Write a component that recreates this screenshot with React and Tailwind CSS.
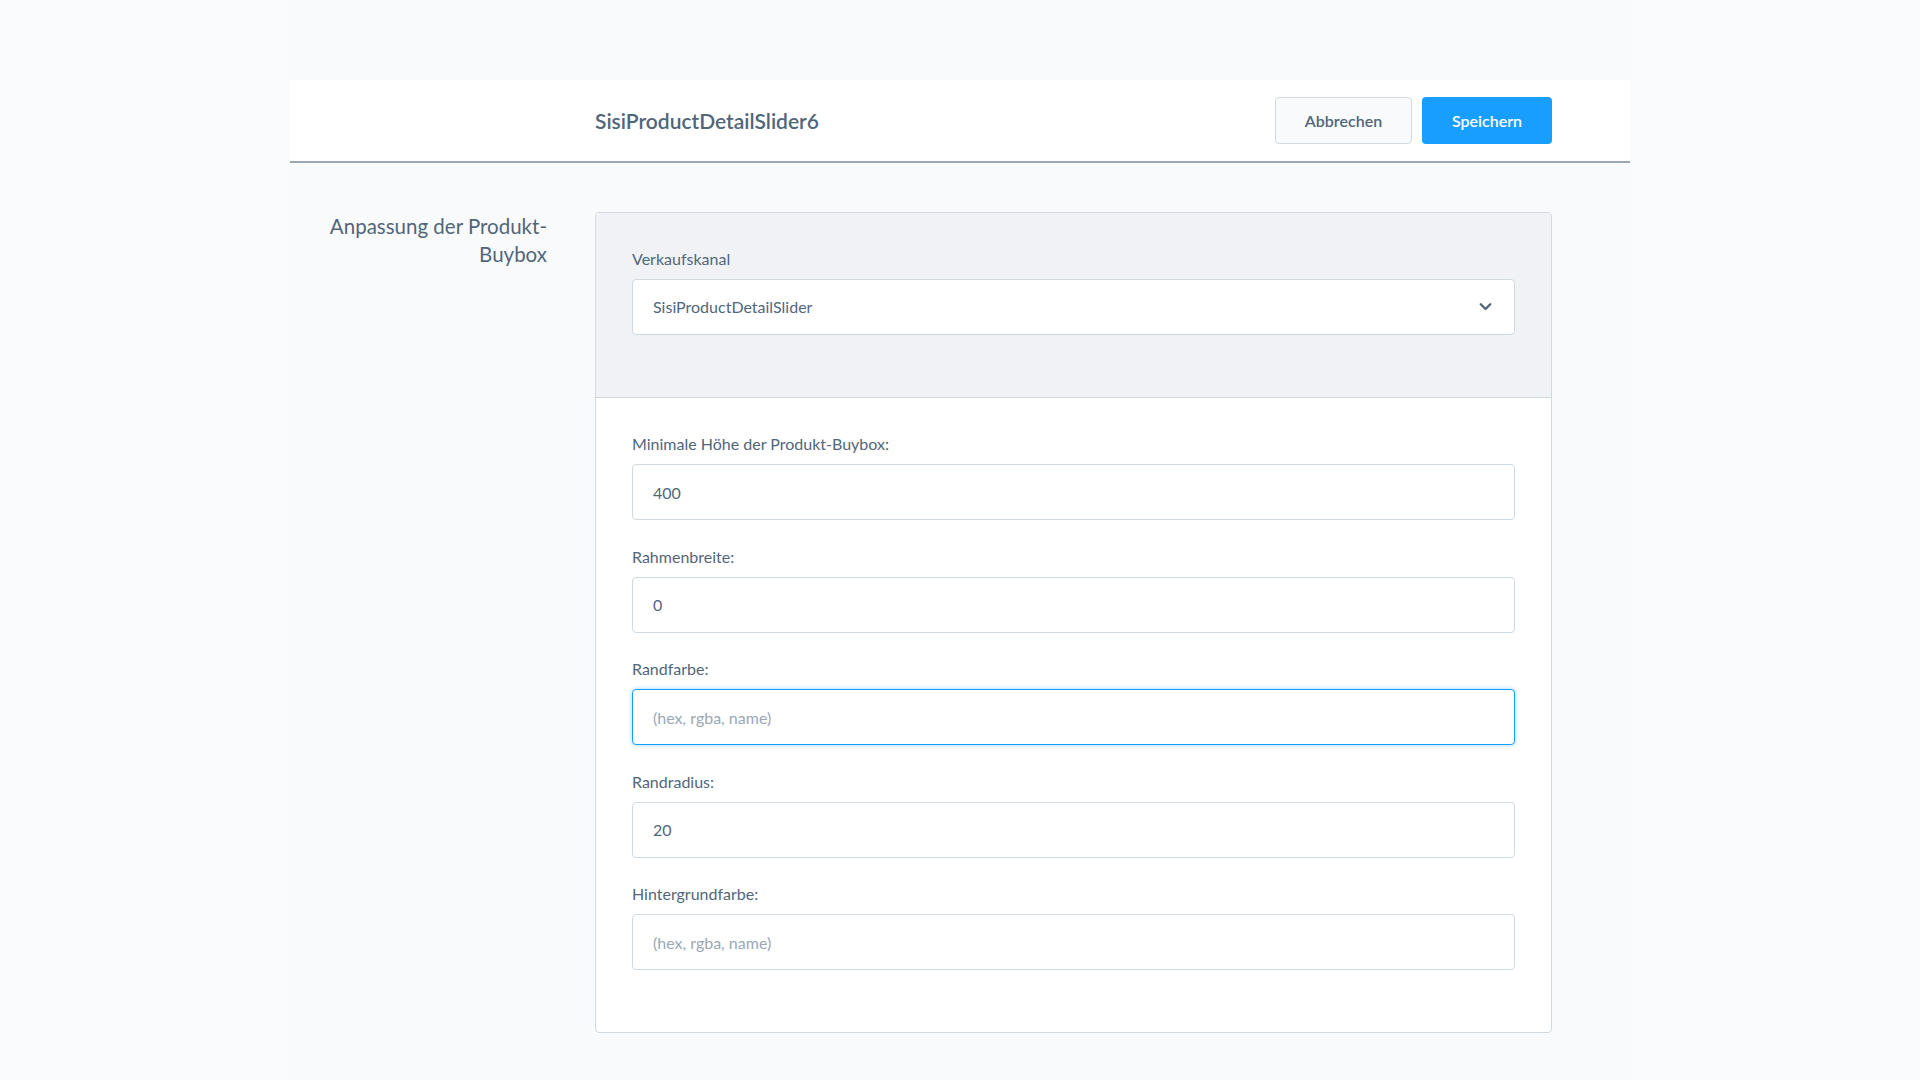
import React from "react";

const font = { fontFamily: "Lato, 'Open Sans', sans-serif" };

function Field({ label, value, placeholder, focused }) {
  return (
    <div className="mb-[26.6px]">
      <label className="block text-[16px] leading-5 text-[#52667a] mb-[10px]">{label}</label>
      <input
        type="text"
        defaultValue={value}
        placeholder={placeholder}
        className={`block w-full h-[56px] rounded-[4px] bg-white px-[20px] text-[16px] text-[#52667a] placeholder:text-[#9aa8b5] outline-none border ${
          focused
            ? "border-[#189eff] shadow-[0_0_4px_rgba(24,158,255,0.45)]"
            : "border-[#d1d9e0]"
        }`}
        style={font}
      />
    </div>
  );
}

export default function App() {
  return (
    <div className="min-h-screen bg-[#fafbfc]" style={font}>
      <div className="mx-auto w-[1340px] min-h-screen bg-[#f9fafb] pt-[80px]">
        {/* header */}
        <div className="h-[83px] bg-white border-b-2 border-[#9aa8b5] flex items-center pl-[305px]">
          <div className="w-[957px] flex items-center justify-between">
            <h1 className="text-[21px] font-semibold text-[#52667a]">SisiProductDetailSlider6</h1>
            <div className="flex gap-[10px]">
              <button className="h-[47px] w-[137px] rounded-[4px] border border-[#d1d9e0] bg-[#f9fafb] text-[16px] font-semibold text-[#52667a]">
                Abbrechen
              </button>
              <button className="h-[47px] w-[130px] rounded-[4px] bg-[#189eff] text-[16px] font-semibold text-white">
                Speichern
              </button>
            </div>
          </div>
        </div>

        {/* body */}
        <div className="flex pt-[49px] pb-[48px]">
          <div className="w-[305px] pr-[48px] text-right">
            <h2 className="text-[20.5px] leading-7 text-[#52667a]">
              Anpassung der Produkt-
              <br />
              Buybox
            </h2>
          </div>

          <div className="w-[957px] border border-[#d1d9e0] rounded-[4px] bg-white overflow-hidden">
            <div className="bg-[#f0f2f5] border-b border-[#d1d9e0] px-[36px] pt-[36px] pb-[36px]">
              <div className="mb-[26px]">
                <label className="block text-[16px] leading-5 text-[#52667a] mb-[10px]">Verkaufskanal</label>
                <div className="relative h-[56px] rounded-[4px] border border-[#d1d9e0] bg-white flex items-center px-[20px]">
                  <span className="text-[16px] text-[#52667a]">SisiProductDetailSlider</span>
                  <svg
                    className="absolute right-[22px] top-1/2 -translate-y-1/2"
                    width="13"
                    height="9"
                    viewBox="0 0 13 9"
                    fill="none"
                  >
                    <path d="M1.75 1.75 L6.5 6.5 L11.25 1.75" stroke="#52667a" strokeWidth="2.4" strokeLinecap="round" strokeLinejoin="round" />
                  </svg>
                </div>
              </div>
            </div>

            <div className="px-[36px] pt-[36px] pb-[35px]">
              <Field label="Minimale Höhe der Produkt-Buybox:" value="400" />
              <Field label="Rahmenbreite:" value="0" />
              <Field label="Randfarbe:" placeholder="(hex, rgba, name)" focused />
              <Field label="Randradius:" value="20" />
              <Field label="Hintergrundfarbe:" placeholder="(hex, rgba, name)" />
            </div>
          </div>
        </div>
      </div>
    </div>
  );
}
